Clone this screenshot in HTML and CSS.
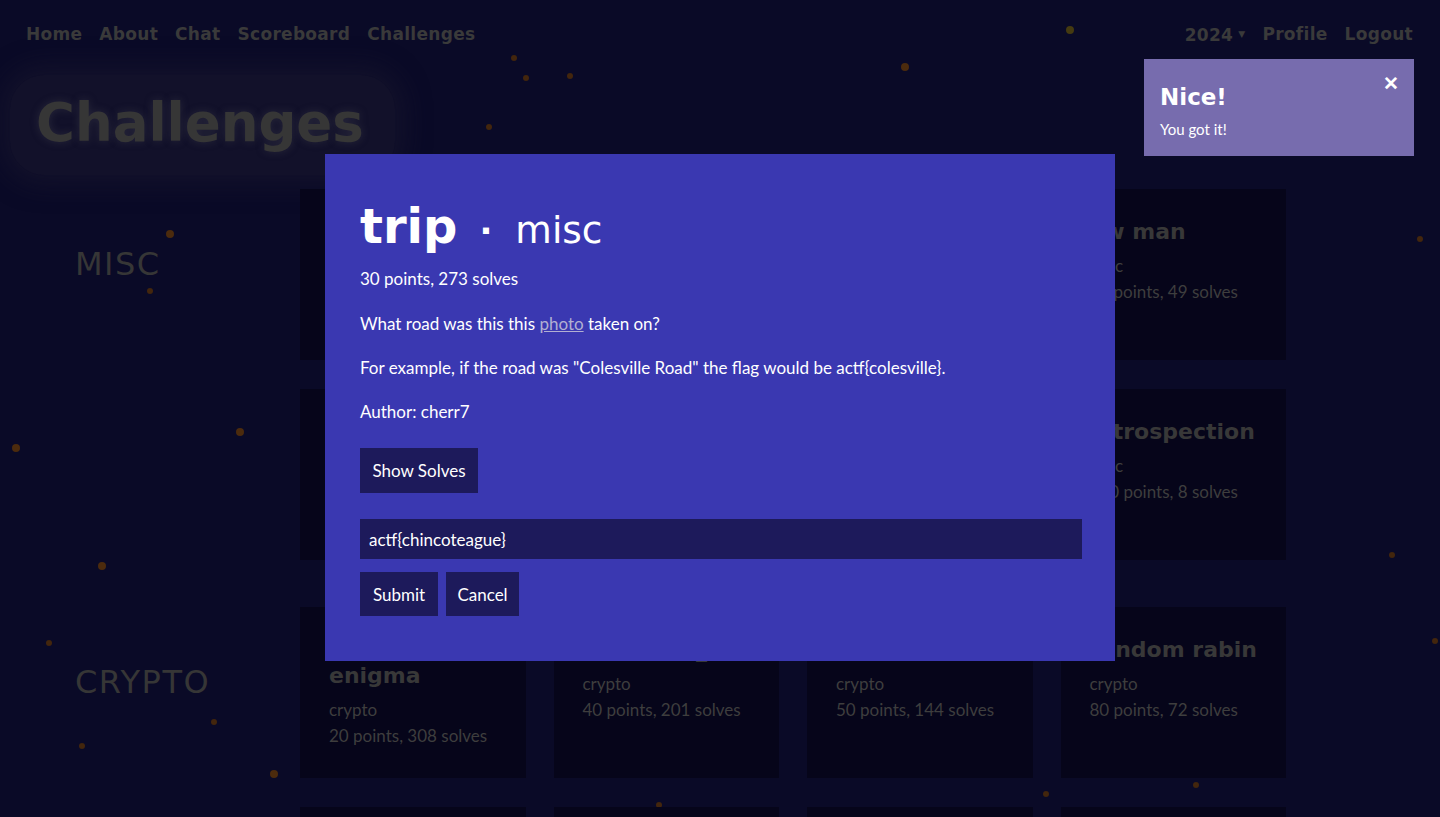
FILE: index.html
```html
<!DOCTYPE html>
<html lang="en">
<head>
<meta charset="utf-8">
<title>Challenges</title>
<link rel="stylesheet" href="styles.css">
</head>
<body>
<div class="particles" aria-hidden="true">
  <span class="dot y" style="left:1066px;top:26px"></span>
  <span class="dot" style="left:901px;top:63px"></span>
  <span class="dot s" style="left:523px;top:75px"></span>
  <span class="dot s" style="left:567px;top:73px"></span>
  <span class="dot s" style="left:511px;top:55px"></span>
  <span class="dot s" style="left:486px;top:124px"></span>
  <span class="dot" style="left:166px;top:230px"></span>
  <span class="dot s" style="left:147px;top:288px"></span>
  <span class="dot" style="left:1204px;top:231px"></span>
  <span class="dot" style="left:236px;top:428px"></span>
  <span class="dot" style="left:12px;top:444px"></span>
  <span class="dot" style="left:98px;top:562px"></span>
  <span class="dot s" style="left:46px;top:640px"></span>
  <span class="dot s" style="left:79px;top:743px"></span>
  <span class="dot" style="left:270px;top:770px"></span>
  <span class="dot s" style="left:211px;top:719px"></span>
  <span class="dot s" style="left:1389px;top:552px"></span>
  <span class="dot s" style="left:1417px;top:236px"></span>
  <span class="dot s" style="left:1193px;top:782px"></span>
  <span class="dot s" style="left:1043px;top:791px"></span>
  <span class="dot s" style="left:656px;top:802px"></span>
  <span class="dot y" style="left:491px;top:731px"></span>
  <span class="dot y" style="left:739px;top:684px"></span>
  <span class="dot s" style="left:1019px;top:751px"></span>
  <span class="dot s" style="left:1432px;top:638px"></span>
  <span class="dot s" style="left:700px;top:754px"></span>
</div>

<nav class="topnav">
  <div class="nav-group">
    <a class="nav-link" href="#">Home</a>
    <a class="nav-link" href="#">About</a>
    <a class="nav-link" href="#">Chat</a>
    <a class="nav-link" href="#">Scoreboard</a>
    <a class="nav-link" href="#">Challenges</a>
  </div>
  <div class="nav-group">
    <a class="nav-link" href="#">2024<span class="caret">▼</span></a>
    <a class="nav-link" href="#">Profile</a>
    <a class="nav-link" href="#">Logout</a>
  </div>
</nav>

<main class="page">
  <div class="page-title"><h1>Challenges</h1></div>

  <section class="category">
    <h2 class="cat-label">MISC</h2>
    <div class="grid">
      <div class="card"><h3>survey</h3><p>misc</p><p>5 points, 412 solves</p></div>
      <div class="card"><h3>kcehc ytinas</h3><p>misc</p><p>10 points, 390 solves</p></div>
      <div class="card"><h3>trip</h3><p>misc</p><p>30 points, 273 solves</p></div>
      <div class="card"><h3>aw man</h3><p>misc</p><p>80 points, 49 solves</p></div>
      <div class="card"><h3>do you wanna build</h3><p>misc</p><p>60 points, 88 solves</p></div>
      <div class="card"><h3>bottom</h3><p>misc</p><p>90 points, 31 solves</p></div>
      <div class="card"><h3>unfair game</h3><p>misc</p><p>110 points, 20 solves</p></div>
      <div class="card"><h3>introspection</h3><p>misc</p><p>100 points, 8 solves</p></div>
    </div>
  </section>

  <section class="category">
    <h2 class="cat-label">CRYPTO</h2>
    <div class="grid">
      <div class="card"><h3>the space enigma</h3><p>crypto</p><p>20 points, 308 solves</p></div>
      <div class="card"><h3>erase my_</h3><p>crypto</p><p>40 points, 201 solves</p></div>
      <div class="card"><h3>layers</h3><p>crypto</p><p>50 points, 144 solves</p></div>
      <div class="card"><h3>random rabin</h3><p>crypto</p><p>80 points, 72 solves</p></div>
      <div class="card"><h3>tss1</h3><p>crypto</p><p>100 points, 40 solves</p></div>
      <div class="card"><h3>tss2</h3><p>crypto</p><p>120 points, 20 solves</p></div>
      <div class="card"><h3>simon says</h3><p>crypto</p><p>130 points, 15 solves</p></div>
      <div class="card"><h3>mceliece</h3><p>crypto</p><p>150 points, 9 solves</p></div>
    </div>
  </section>
</main>

<div class="modal">
  <h2 class="modal-title">trip<span class="sep">·</span><span class="modal-cat">misc</span></h2>
  <p class="modal-meta">30 points, 273 solves</p>
  <p class="modal-text">What road was this this <a class="modal-link" href="#">photo</a> taken on?</p>
  <p class="modal-text">For example, if the road was "Colesville Road" the flag would be actf{colesville}.</p>
  <p class="modal-text">Author: cherr7</p>
  <button class="btn btn-solves" type="button">Show Solves</button>
  <form class="flag-form">
    <input class="flag-input" type="text" value="actf{chincoteague}">
    <div class="form-actions">
      <button class="btn btn-submit" type="button">Submit</button>
      <button class="btn btn-cancel" type="button">Cancel</button>
    </div>
  </form>
</div>

<div class="toast">
  <div class="toast-title">Nice!</div>
  <div class="toast-text">You got it!</div>
  <span class="toast-close">✕</span>
</div>
</body>
</html>
```

FILE: styles.css
```css
* { box-sizing: border-box; }

html, body {
  margin: 0;
  height: 817px;
  overflow: hidden;
}

body {
  background: #0a0a27;
  font-family: Lato, "Noto Sans", sans-serif;
  color: #383838;
  position: relative;
}

.particles {
  position: absolute;
  inset: 0;
  pointer-events: none;
}

.dot {
  position: absolute;
  width: 8px;
  height: 8px;
  border-radius: 50%;
  background: #4c2b0d;
}
.dot.s { width: 6px; height: 6px; background: #43260d; }
.dot.y { background: #453a10; }

/* nav */
.topnav {
  position: relative;
  display: flex;
  justify-content: space-between;
  padding: 24px 27px 0 26px;
  height: 60px;
}
.nav-group { display: flex; gap: 17px; }
.nav-link {
  font-family: "DejaVu Sans", sans-serif;
  font-weight: bold;
  font-size: 17px;
  line-height: 20px;
  color: #3a3a3a;
  text-decoration: none;
  letter-spacing: 0.3px;
}
.caret {
  font-size: 9px;
  margin-left: 5px;
  vertical-align: 4px;
}

/* page */
.page { position: relative; }

.page-title {
  margin-left: 10px;
  margin-top: 15px;
  width: 385px;
  padding: 16px 26px 20px;
  border-radius: 34px;
  background: rgba(26, 24, 46, 0.55);
  box-shadow: 0 0 24px 10px rgba(26, 24, 46, 0.55);
}
.page-title h1 {
  margin: 0;
  font-family: "DejaVu Sans", sans-serif;
  font-weight: bold;
  font-size: 53px;
  line-height: 64px;
  color: #363636;
  text-shadow: 0 0 8px rgba(80, 80, 90, 0.35);
}

.category {
  display: flex;
  margin-top: 14px;
}
.category + .category { margin-top: 47px; }

.cat-label {
  width: 300px;
  flex: none;
  margin: 55px 0 0;
  padding-left: 75px;
  font-family: "DejaVu Sans", sans-serif;
  font-weight: normal;
  font-size: 32px;
  line-height: 40px;
  color: #363636;
  letter-spacing: 1.5px;
}

.grid {
  display: grid;
  grid-template-columns: repeat(4, 225.5px);
  column-gap: 28px;
  row-gap: 29px;
}

.card {
  height: 171px;
  background: #06051a;
  padding: 30px 28px 0 29px;
}
.card h3 {
  margin: 0 0 8px;
  font-family: "DejaVu Sans", sans-serif;
  font-weight: bold;
  font-size: 22px;
  line-height: 26px;
  color: #383838;
}
.card p {
  margin: 0;
  font-size: 17px;
  line-height: 26px;
  color: #3e3e3e;
}

/* modal */
.modal {
  position: absolute;
  left: 325px;
  top: 154px;
  width: 790px;
  height: 507px;
  background: #3a38b1;
  padding: 35px 33px 0 35px;
  color: #ffffff;
}
.modal-title {
  margin: 0;
  font-family: "DejaVu Sans", sans-serif;
  font-weight: bold;
  font-size: 48px;
  line-height: 74px;
}
.sep {
  display: inline-block;
  font-size: 34px;
  font-weight: bold;
  margin: 0 23px 0 22px;
}
.modal-cat {
  font-weight: normal;
  font-size: 37.5px;
}
.modal-meta {
  margin: -1px 0 21px;
  font-size: 17px;
  line-height: 24px;
}
.modal-text {
  margin: 0 0 20px;
  font-size: 17px;
  line-height: 24px;
}
.modal-link {
  color: #b2b0d2;
  text-decoration: underline;
}

.btn {
  display: inline-block;
  border: 0;
  background: #1d1a5b;
  color: #ffffff;
  font-family: Lato, "Noto Sans", sans-serif;
  font-size: 17px;
  height: 44px;
  padding: 0 10px;
  cursor: pointer;
}
.btn-solves {
  margin-top: 4px;
  height: 45px;
  width: 118px;
}

.flag-form { margin-top: 26px; }
.flag-input {
  display: block;
  width: 722px;
  height: 40px;
  border: 0;
  outline: none;
  background: #1d1a5b;
  color: #ffffff;
  font-family: Lato, "Noto Sans", sans-serif;
  font-size: 17px;
  padding: 0 9px;
}
.form-actions {
  display: flex;
  gap: 8px;
  margin-top: 13px;
}
.btn-submit { width: 78px; }
.btn-cancel { width: 73px; }

/* toast */
.toast {
  position: absolute;
  top: 59px;
  right: 26px;
  width: 270px;
  height: 97px;
  background: #776cae;
  color: #ffffff;
  padding: 24px 16px 0;
}
.toast-title {
  font-family: "DejaVu Sans", sans-serif;
  font-weight: bold;
  font-size: 23px;
  line-height: 28px;
}
.toast-text {
  margin-top: 8px;
  font-size: 15px;
  line-height: 20px;
}
.toast-close {
  position: absolute;
  top: 12px;
  right: 15px;
  font-size: 19px;
  font-weight: bold;
  line-height: 24px;
}
```
